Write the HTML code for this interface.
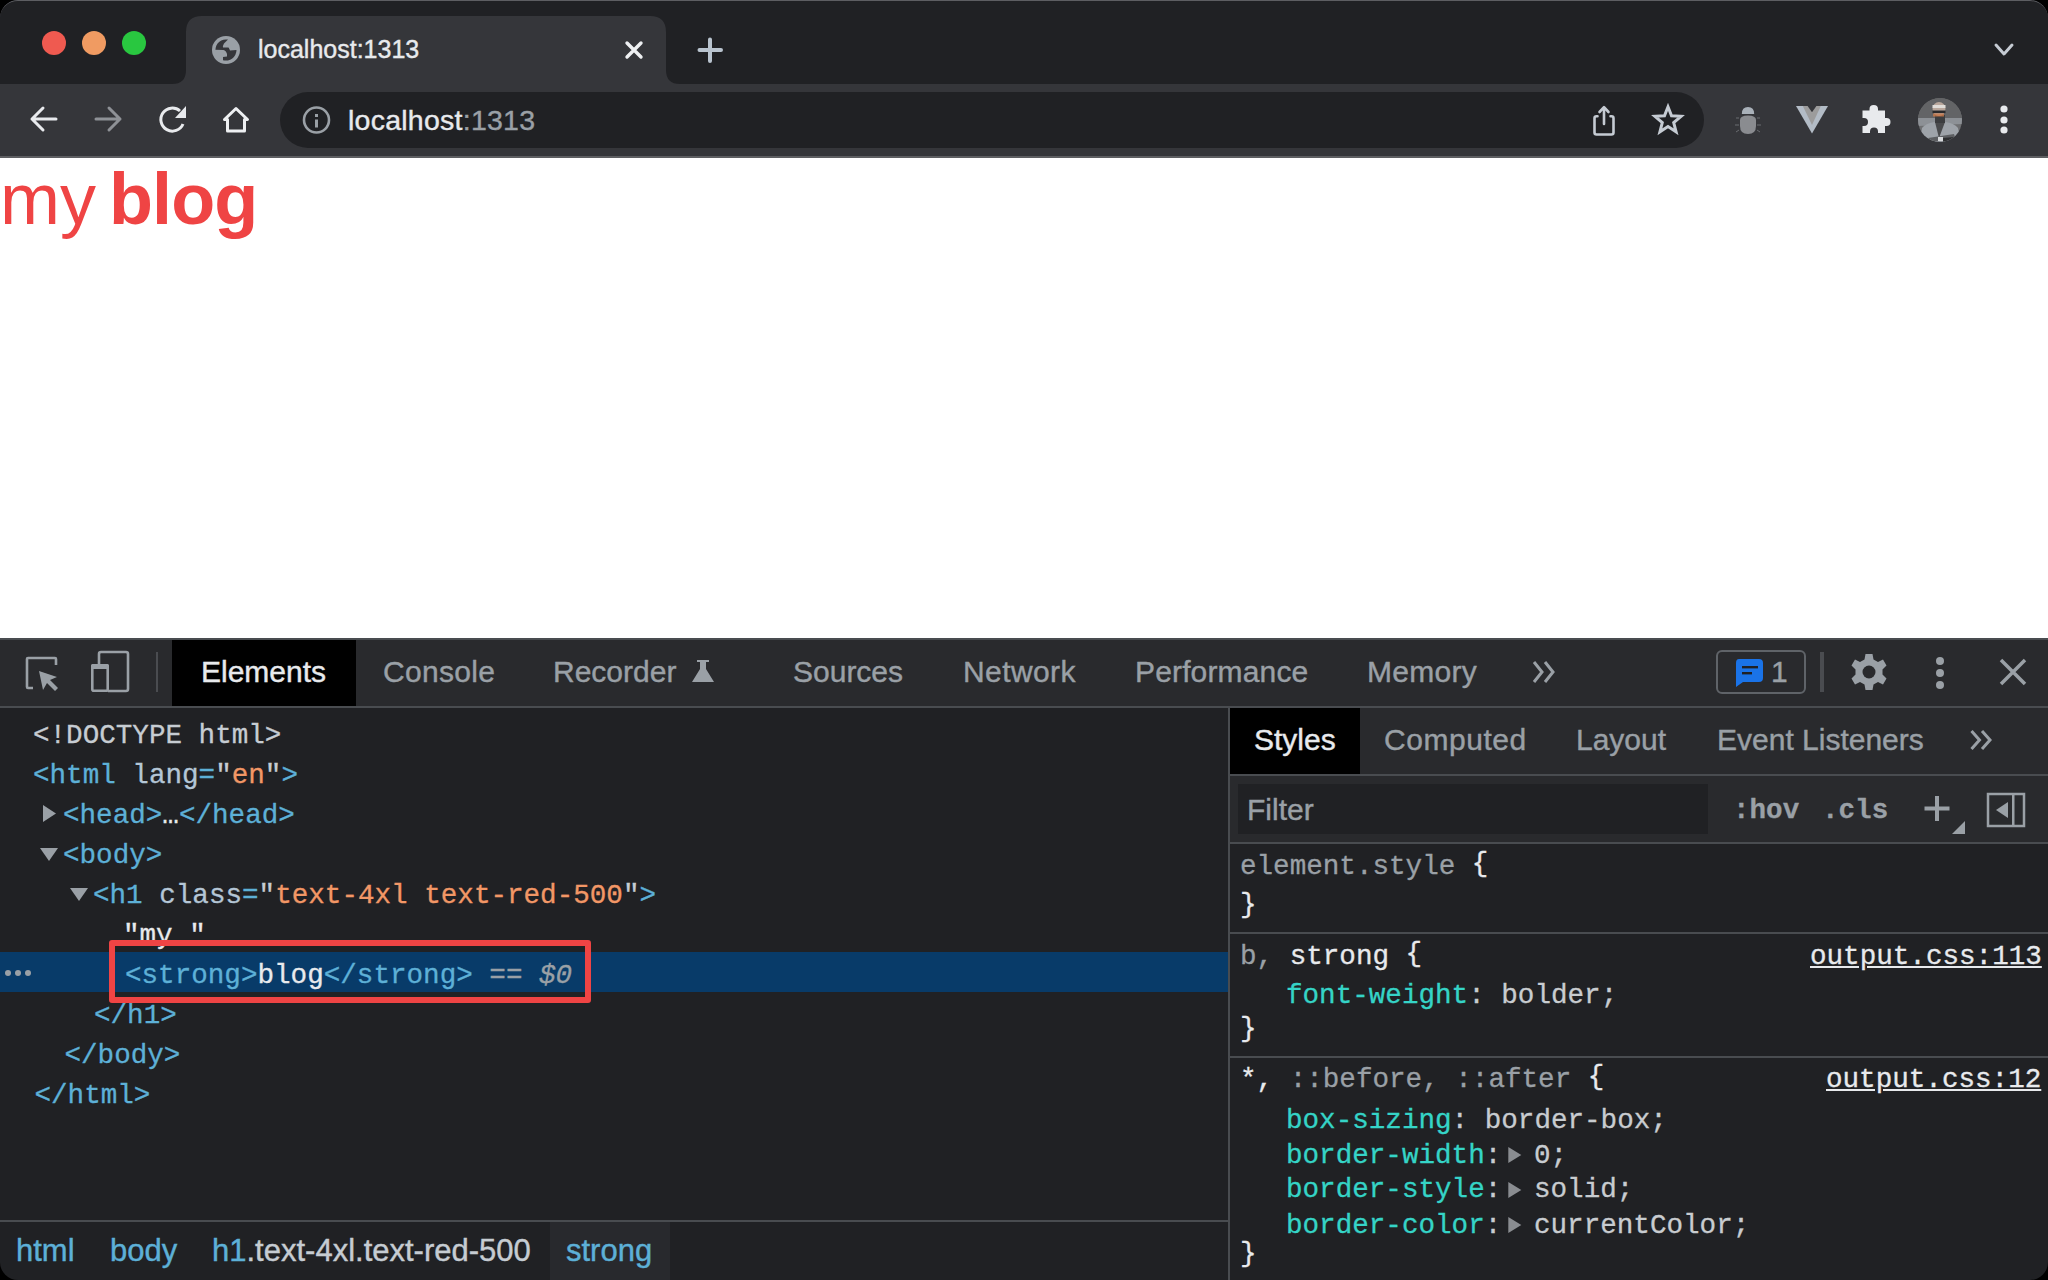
<!DOCTYPE html>
<html lang="en">
<head>
<meta charset="utf-8">
<style>
*{box-sizing:border-box;margin:0;padding:0}
html,body{width:2048px;height:1280px;overflow:hidden;background:#000}
body{position:relative;font-family:"Liberation Sans",sans-serif}
.a{position:absolute}
.s{font-family:"Liberation Sans",sans-serif;line-height:1;white-space:pre;-webkit-text-stroke:0.4px currentColor}
.m{font-family:"Liberation Mono",monospace;line-height:1;white-space:pre;-webkit-text-stroke:0.3px currentColor}
#win{position:absolute;left:0;top:0;width:2048px;height:1280px;border-radius:18px;overflow:hidden;background:#202124}
.tag{color:#5db0d7}
.an{color:#b4c6d6}
.av{color:#f29766}
.q{color:#c6ccd2}
.pn{color:#35d4c7}
.pv{color:#c8ccd0}
.gr{color:#9aa0a6}
.wh{color:#e8eaed}
</style>
</head>
<body>
<div id="win">
  <!-- title bar -->
  <div class="a" style="left:0;top:0;width:2048px;height:84px;background:#202124"></div>
    <!-- traffic lights -->
  <div class="a" style="left:42px;top:31px;width:24px;height:24px;border-radius:50%;background:#ef5a50"></div>
  <div class="a" style="left:82px;top:31px;width:24px;height:24px;border-radius:50%;background:#f09b62"></div>
  <div class="a" style="left:122px;top:31px;width:24px;height:24px;border-radius:50%;background:#29c740"></div>
  <!-- tab -->
  <svg class="a" style="left:0;top:0" width="2048" height="90">
    <path d="M172 84 Q186 84 186 70 L186 32 Q186 16 202 16 L650 16 Q666 16 666 32 L666 70 Q666 84 680 84 Z" fill="#35363a"/>
    <!-- globe -->
    <circle cx="226" cy="50" r="14" fill="#9aa0a6"/>
    <path d="M215.4 49.7 A10.6 10.6 0 0 1 228 39.6 L224 43.5 Q222.5 46 223 47.5 L228.5 47.5 Q229.5 49 230 50.5 L236.5 50 A10.6 10.6 0 0 1 223 60.2 L223 57 L227 56.5 L227 54 Q226 50.5 223.5 50 Z" fill="#35363a"/>
    <!-- close x -->
    <path d="M627 43 L641 57 M641 43 L627 57" stroke="#eef0f2" stroke-width="3.4" stroke-linecap="round"/>
    <!-- plus -->
    <path d="M710 39.5 L710 61 M699.5 50 L721 50" stroke="#b9c4cf" stroke-width="4" stroke-linecap="round"/>
    <!-- chevron -->
    <path d="M1996 45 L2004 54 L2012 45" fill="none" stroke="#c5cbd3" stroke-width="3" stroke-linecap="round" stroke-linejoin="round"/>
  </svg>
  <div class="a s" style="left:258px;top:37px;font-size:25px;color:#e8eaed">localhost:1313</div>

  <!-- toolbar -->
  <div class="a" style="left:0;top:84px;width:2048px;height:72px;background:#35363a"></div>
  <div class="a" style="left:0;top:156px;width:2048px;height:2px;background:#5e5f62"></div>
  <div class="a" style="left:280px;top:92px;width:1424px;height:56px;border-radius:28px;background:#202124"></div>
  <svg class="a" style="left:0;top:84px" width="2048" height="72">
    <!-- back -->
    <path d="M56 35 L32 35 M43 24 L32 35 L43 46" fill="none" stroke="#e8eaed" stroke-width="3" stroke-linecap="round" stroke-linejoin="round"/>
    <!-- forward -->
    <path d="M96 35 L120 35 M109 24 L120 35 L109 46" fill="none" stroke="#8e9196" stroke-width="3" stroke-linecap="round" stroke-linejoin="round"/>
    <!-- reload -->
    <path d="M183 40 A11.5 11.5 0 1 1 180 27" fill="none" stroke="#e8eaed" stroke-width="3"/>
    <path d="M186 22 L186 34 L175 34 Z" fill="#e8eaed"/>
    <!-- home -->
    <path d="M227.5 47 L227.5 35.5 L224.5 35.5 L236 24.5 L247.5 35.5 L244.5 35.5 L244.5 47 Z" fill="none" stroke="#eef0f2" stroke-width="3" stroke-linejoin="round"/>
    <!-- info -->
    <circle cx="316.5" cy="36" r="12.5" fill="none" stroke="#9aa0a6" stroke-width="2.6"/>
    <rect x="315" y="35.5" width="3" height="8" fill="#9aa0a6"/>
    <rect x="315" y="30" width="3" height="3" fill="#9aa0a6"/>
    <!-- share -->
    <path d="M1597.5 32.3 L1596.5 32.3 Q1594.5 32.3 1594.5 34.3 L1594.5 48.5 Q1594.5 50.5 1596.5 50.5 L1611.5 50.5 Q1613.5 50.5 1613.5 48.5 L1613.5 34.3 Q1613.5 32.3 1611.5 32.3 L1610.5 32.3" fill="none" stroke="#c5cbd3" stroke-width="2.6" stroke-linecap="round"/>
    <path d="M1604 24 L1604 40 M1599.5 28 L1604 23.2 L1608.5 28" fill="none" stroke="#c5cbd3" stroke-width="2.6" stroke-linecap="round" stroke-linejoin="round"/>
    <!-- star -->
    <path d="M1668.0 22.8 L1671.5 31.7 L1681.1 32.3 L1673.7 38.5 L1676.1 47.8 L1668.0 42.6 L1659.9 47.8 L1662.3 38.5 L1654.9 32.3 L1664.5 31.7 Z" fill="none" stroke="#c5cbd3" stroke-width="3" stroke-linejoin="miter"/>
    <!-- bug -->
    <path d="M1741.8 30 Q1741.8 23 1748 23 Q1754.2 23 1754.2 30 Z" fill="#a9b1b9"/>
    <path d="M1740 36 Q1740 31.5 1748 31.5 Q1756 31.5 1756 36 L1756 42 Q1756 50 1748 50 Q1740 50 1740 42 Z" fill="#8a8c90"/>
    <path d="M1736 34 L1739 34 M1735 41 L1739 41 M1736 48 L1739 46 M1757 34 L1760 34 M1757 41 L1761 41 M1757 46 L1760 48" stroke="#6a6c70" stroke-width="1"/>
    <!-- vue -->
    <path d="M1796 22 L1828 22 L1812 49.6 Z" fill="#b3bcc6"/>
    <path d="M1802.8 22 L1820.8 22 L1812 40.9 Z" fill="#9c9c9c"/>
    <path d="M1807.6 22 L1816.4 22 L1812 28.2 Z" fill="#35363a"/>
    <!-- puzzle -->
    <path d="M1862.5 26.5 L1869.5 26.5 L1869.5 25 Q1869.5 21 1873.7 21 Q1878 21 1878 25 L1878 26.5 L1885 26.5 L1885 34 L1886.5 34 Q1890.5 34 1890.5 38 Q1890.5 42 1886.5 42 L1885 42 L1885 49 L1878 49 L1878 47.5 Q1878 43.5 1874 43.5 Q1870 43.5 1870 47.5 L1870 49 L1862.5 49 L1862.5 42 L1864 42 Q1868 42 1868 38 Q1868 34 1864 34 L1862.5 34 Z" fill="#e8eaed"/>
    <!-- kebab -->
    <circle cx="2004" cy="25" r="3.6" fill="#e8eaed"/>
    <circle cx="2004" cy="36" r="3.6" fill="#e8eaed"/>
    <circle cx="2004" cy="46" r="3.6" fill="#e8eaed"/>
  </svg>
  <!-- avatar -->
  <svg class="a" style="left:1918px;top:98px" width="44" height="44">
    <defs><clipPath id="avc"><circle cx="22" cy="22" r="22"/></clipPath></defs>
    <g clip-path="url(#avc)">
      <rect width="44" height="44" fill="#6f7072"/>
      <rect x="0" y="0" width="44" height="20" fill="#636466"/>
      <path d="M0 20 L44 20 L44 26 L0 28 Z" fill="#8d9196"/>
      <path d="M2 44 L4 30 Q8 25 17 24 L27 24 Q36 25 40 30 L43 44 Z" fill="#9ea3a9"/>
      <path d="M17 24 L21 40 L27 24 Z" fill="#4a4b4d"/>
      <rect x="17" y="17" width="10" height="8" fill="#3c3d3f"/>
      <ellipse cx="21" cy="11" rx="6.5" ry="7" fill="#b9a79c"/>
      <rect x="14.5" y="7" width="13" height="3" fill="#e0dcd8"/>
      <rect x="14.5" y="12.5" width="13" height="2.6" fill="#2a2a2c"/>
      <rect x="15" y="15.5" width="11" height="3" fill="#c8784a" opacity="0.8"/>
      <path d="M10 40 L36 36 L38 42 L12 44 Z" fill="#5d5f62"/>
      <path d="M25 40 L36 39 L36 44 L25 44 Z" fill="#2e2f31"/>
      <rect x="20" y="39" width="5" height="4" fill="#d8dadc"/>
    </g>
  </svg>
  <div class="a s" style="left:348px;top:105.5px;font-size:28.5px;letter-spacing:0.25px;color:#e8eaed">localhost<span style="color:#9aa0a6">:1313</span></div>

  <!-- page -->
  <div class="a" style="left:0;top:158px;width:2048px;height:480px;background:#fff"></div>
  <div class="a s" style="left:0;top:163px;font-size:72px;color:#ef4444;-webkit-text-stroke:0">my <b style="margin-left:-7px;letter-spacing:-0.9px">blog</b></div>

  <!-- devtools toolbar -->
  <div class="a" style="left:0;top:638px;width:2048px;height:2px;background:#494c50"></div>
  <div class="a" style="left:0;top:640px;width:2048px;height:66px;background:#292a2d"></div>
  <div class="a" style="left:0;top:706px;width:2048px;height:2px;background:#494c50"></div>
  <div class="a" style="left:172px;top:640px;width:184px;height:66px;background:#000"></div>
  <svg class="a" style="left:0;top:640px" width="2048" height="66">
    <!-- inspect -->
    <path d="M33 48 L28 48 Q27 48 27 47 L27 19 Q27 18 28 18 L55 18 Q56 18 56 19 L56 25" fill="none" stroke="#9aa0a6" stroke-width="2.6"/>
    <path d="M39 31 L57 37 L50 40 L58 48 L55 51 L47 43 L43 50 Z" fill="#9aa0a6"/>
    <!-- device -->
    <path d="M99 24 L99 14 Q99 12 101 12 L126 12 Q128 12 128 14 L128 49 Q128 51 126 51 L108 51" fill="none" stroke="#9aa0a6" stroke-width="2.6"/>
    <rect x="92.3" y="25.3" width="15.4" height="25.4" rx="1.5" fill="none" stroke="#9aa0a6" stroke-width="2.6"/>
    <rect x="91" y="24" width="18" height="5" rx="1.5" fill="#9aa0a6"/>
    <rect x="156" y="12" width="2" height="40" fill="#4a4c50"/>
    <!-- flask -->
    <path d="M697 20 L709 20 L709 22 L706 22 L706 29 L714 42 L692 42 L700 29 L700 22 L697 22 Z" fill="#9aa0a6"/>
    <!-- chevrons -->
    <path d="M1534 22 L1542 32 L1534 42 M1545 22 L1553 32 L1545 42" fill="none" stroke="#9aa0a6" stroke-width="3"/>
    <!-- issues badge -->
    <rect x="1717" y="11" width="88" height="42" rx="5" fill="none" stroke="#5f6368" stroke-width="2"/>
    <path d="M1739 19 L1759 19 Q1763 19 1763 23 L1763 38 Q1763 42 1759 42 L1743 42 L1736 47 L1736 23 Q1736 19 1739 19 Z" fill="#1a73e8"/>
    <rect x="1742" y="26" width="16" height="2.4" fill="#202124"/>
    <rect x="1742" y="32" width="10" height="2.4" fill="#202124"/>
    <rect x="1820" y="12" width="4" height="40" fill="#4a4c50"/>
    <!-- gear -->
    <g transform="translate(1869,32)">
      <path d="M-3.5 -18 L3.5 -18 L4.5 -12.5 L9 -10 L14 -12.5 L17.5 -6.5 L13.5 -2.5 L13.5 2.5 L17.5 6.5 L14 12.5 L9 10 L4.5 12.5 L3.5 18 L-3.5 18 L-4.5 12.5 L-9 10 L-14 12.5 L-17.5 6.5 L-13.5 2.5 L-13.5 -2.5 L-17.5 -6.5 L-14 -12.5 L-9 -10 L-4.5 -12.5 Z" fill="#9aa0a6"/>
      <circle r="6.5" fill="#292a2d"/>
    </g>
    <!-- kebab -->
    <circle cx="1940" cy="21" r="4" fill="#9aa0a6"/>
    <circle cx="1940" cy="33" r="4" fill="#9aa0a6"/>
    <circle cx="1940" cy="45" r="4" fill="#9aa0a6"/>
    <!-- close -->
    <path d="M2001 20 L2025 44 M2025 20 L2001 44" stroke="#9aa0a6" stroke-width="3.5"/>
  </svg>
  <div class="a s" style="left:201px;top:657px;font-size:30px;color:#e8eaed">Elements</div>
  <div class="a s gr" style="left:383px;top:657px;font-size:30px;letter-spacing:0.3px">Console</div>
  <div class="a s gr" style="left:553px;top:657px;font-size:30px">Recorder</div>
  <div class="a s gr" style="left:793px;top:657px;font-size:30px">Sources</div>
  <div class="a s gr" style="left:963px;top:657px;font-size:30px;letter-spacing:0.4px">Network</div>
  <div class="a s gr" style="left:1135px;top:657px;font-size:30px;letter-spacing:0.15px">Performance</div>
  <div class="a s gr" style="left:1367px;top:657px;font-size:30px;letter-spacing:0.3px">Memory</div>
  <div class="a s gr" style="left:1771px;top:657px;font-size:30px">1</div>

  <!-- elements tree -->
  <div class="a" style="left:0;top:952px;width:1228px;height:40px;background:#083b69"></div>
  <div id="tree">
  <div class="a m q" style="left:33px;top:722px;font-size:27.6px">&lt;!DOCTYPE html&gt;</div>
  <div class="a m" style="left:33px;top:762px;font-size:27.6px"><span class="tag">&lt;html</span> <span class="an">lang</span><span class="tag">=</span><span class="q">"</span><span class="av">en</span><span class="q">"</span><span class="tag">&gt;</span></div>
  <div class="a m" style="left:63px;top:802px;font-size:27.6px"><span class="tag">&lt;head&gt;</span><span class="wh">…</span><span class="tag">&lt;/head&gt;</span></div>
  <div class="a m" style="left:63px;top:842px;font-size:27.6px"><span class="tag">&lt;body&gt;</span></div>
  <div class="a m" style="left:93px;top:882px;font-size:27.6px"><span class="tag">&lt;h1</span> <span class="an">class</span><span class="tag">=</span><span class="q">"</span><span class="av">text-4xl text-red-500</span><span class="q">"</span><span class="tag">&gt;</span></div>
  <div class="a m wh" style="left:123px;top:922px;font-size:27.6px">"my "</div>
  <div class="a m" style="left:125px;top:962px;font-size:27.6px"><span class="tag">&lt;strong&gt;</span><span class="wh">blog</span><span class="tag">&lt;/strong&gt;</span><span class="gr"> == <i>$0</i></span></div>
  <div class="a m" style="left:94px;top:1002px;font-size:27.6px"><span class="tag">&lt;/h1&gt;</span></div>
  <div class="a m" style="left:64.5px;top:1042px;font-size:27.6px"><span class="tag">&lt;/body&gt;</span></div>
  <div class="a m" style="left:34.5px;top:1082px;font-size:27.6px"><span class="tag">&lt;/html&gt;</span></div>
  </div>
  <svg class="a" style="left:0;top:700px" width="1228" height="420">
    <path d="M43 105 L56 113.5 L43 122 Z" fill="#9aa0a6"/>
    <path d="M40 148 L58 148 L49 161 Z" fill="#9aa0a6"/>
    <path d="M70 188 L88 188 L79 201 Z" fill="#9aa0a6"/>
    <circle cx="8" cy="273" r="3" fill="#9aa0a6"/>
    <circle cx="18" cy="273" r="3" fill="#9aa0a6"/>
    <circle cx="28" cy="273" r="3" fill="#9aa0a6"/>
  </svg>
  <div class="a" style="left:109px;top:940px;width:482px;height:63px;border:6px solid #ef4444;border-radius:3px"></div>

  <!-- breadcrumbs -->
  <div class="a" style="left:0;top:1220px;width:1228px;height:2px;background:#494c50"></div>
  <div class="a" style="left:550px;top:1222px;width:120px;height:58px;background:#28292d"></div>
  <div class="a s tag" style="left:16px;top:1235px;font-size:31px">html</div>
  <div class="a s tag" style="left:110px;top:1235px;font-size:31px">body</div>
  <div class="a s" style="left:212px;top:1235px;font-size:31px"><span class="tag">h1</span><span class="q">.text-4xl.text-red-500</span></div>
  <div class="a s tag" style="left:566px;top:1235px;font-size:31px">strong</div>

  <!-- styles pane -->
  <div class="a" style="left:1228px;top:708px;width:2px;height:572px;background:#494c50"></div>
  <div class="a" style="left:1230px;top:708px;width:818px;height:66px;background:#292a2d"></div>
  <div class="a" style="left:1230px;top:708px;width:130px;height:66px;background:#000"></div>
  <div class="a" style="left:1230px;top:774px;width:818px;height:2px;background:#494c50"></div>
  <div class="a" style="left:1230px;top:776px;width:818px;height:66px;background:#292a2d"></div>
  <div class="a" style="left:1238px;top:784px;width:470px;height:50px;background:#202124"></div>
  <div class="a" style="left:1230px;top:842px;width:818px;height:2px;background:#494c50"></div>
  <div class="a s" style="left:1254px;top:725px;font-size:30px;color:#e8eaed">Styles</div>
  <div class="a s gr" style="left:1384px;top:725px;font-size:30px;letter-spacing:0.55px">Computed</div>
  <div class="a s gr" style="left:1576px;top:725px;font-size:30px">Layout</div>
  <div class="a s gr" style="left:1717px;top:725px;font-size:30px">Event Listeners</div>
  <div class="a s gr" style="left:1247px;top:795px;font-size:30px">Filter</div>
  <div class="a m gr" style="left:1733px;top:797px;font-size:27.6px;font-weight:bold">:hov</div>
  <div class="a m gr" style="left:1822px;top:797px;font-size:27.6px;font-weight:bold">.cls</div>
  <svg class="a" style="left:1230px;top:708px" width="818" height="140">
    <path d="M741.5 23 L749.5 32 L741.5 41 M752 23 L760 32 L752 41" fill="none" stroke="#9aa0a6" stroke-width="3"/>
    <path d="M707 88 L707 113 M694.5 100.5 L719.5 100.5" stroke="#9aa0a6" stroke-width="4"/>
    <path d="M735 113 L735 126 L722 126 Z" fill="#9aa0a6"/>
    <rect x="758" y="86" width="36" height="32" fill="none" stroke="#9aa0a6" stroke-width="2.5"/>
    <rect x="782" y="86" width="2.5" height="32" fill="#9aa0a6"/>
    <path d="M778 94 L766 102 L778 110 Z" fill="#9aa0a6"/>
  </svg>

  <div class="a" style="left:1230px;top:932px;width:818px;height:2px;background:#494c50"></div>
  <div class="a" style="left:1230px;top:1056px;width:818px;height:2px;background:#494c50"></div>

  <div class="a m" style="left:1240px;top:853px;font-size:27.6px"><span class="gr">element.style</span> <span class="wh" style="position:relative;top:-3px">{</span></div>
  <div class="a m wh" style="left:1240px;top:890.5px;font-size:27.6px">}</div>
  <div class="a m" style="left:1240px;top:943px;font-size:27.6px"><span class="gr">b,</span> <span class="wh">strong <span style="position:relative;top:-3px">{</span></span></div>
  <div class="a m" style="left:1286px;top:982px;font-size:27.6px"><span class="pn">font-weight</span><span class="pv">: bolder;</span></div>
  <div class="a m wh" style="left:1240px;top:1014.5px;font-size:27.6px">}</div>
  <div class="a m wh" style="left:1810px;top:943px;font-size:27.6px;text-decoration:underline">output.css:113</div>
  <div class="a m" style="left:1240px;top:1066px;font-size:27.6px"><span class="wh">*,</span> <span class="gr">::before, ::after</span> <span class="wh" style="position:relative;top:-3px">{</span></div>
  <div class="a m wh" style="left:1826px;top:1066px;font-size:27.6px;text-decoration:underline">output.css:12</div>
  <div class="a m" style="left:1286px;top:1107px;font-size:27.6px"><span class="pn">box-sizing</span><span class="pv">: border-box;</span></div>
  <div class="a m" style="left:1286px;top:1142px;font-size:27.6px"><span class="pn">border-width</span><span class="pv">:</span></div>
  <div class="a m" style="left:1286px;top:1176px;font-size:27.6px"><span class="pn">border-style</span><span class="pv">:</span></div>
  <div class="a m" style="left:1286px;top:1212px;font-size:27.6px"><span class="pn">border-color</span><span class="pv">:</span></div>
  <div class="a m pv" style="left:1534px;top:1142px;font-size:27.6px">0;</div>
  <div class="a m pv" style="left:1534px;top:1176px;font-size:27.6px">solid;</div>
  <div class="a m pv" style="left:1534px;top:1212px;font-size:27.6px">currentColor;</div>
  <div class="a m wh" style="left:1240px;top:1240px;font-size:27.6px">}</div>
  <svg class="a" style="left:1500px;top:1140px" width="40" height="110">
    <path d="M8.3 7 L21.3 15 L8.3 23 Z" fill="#8a8d91"/>
    <path d="M8.3 42 L21.3 50 L8.3 58 Z" fill="#8a8d91"/>
    <path d="M8.3 77 L21.3 85 L8.3 93 Z" fill="#8a8d91"/>
  </svg>
  <div class="a" style="left:0;top:0;width:2048px;height:60px;border-top:1.5px solid #5d5e62;border-radius:18px 18px 0 0"></div>
</div>
</body>
</html>
